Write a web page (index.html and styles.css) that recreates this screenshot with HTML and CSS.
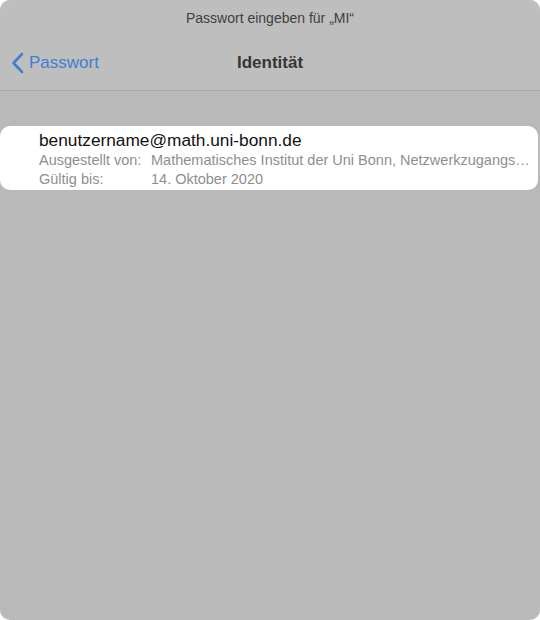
FILE: index.html
```html
<!DOCTYPE html>
<html>
<head>
    <link rel="stylesheet" href="styles.css">
</head>
<body>
    <div class="sheet">
        <div class="header">
            <div class="prompt">Passwort eingeben für „MI“</div>
            <div class="navbar">
                <a class="back" href="#">
                    <svg class="chevron" width="13" height="22" viewBox="0 0 13 22">
                        <path d="M11 2 L2.5 11 L11 20" fill="none" stroke="#3f7fd0" stroke-width="2.6" stroke-linecap="round" stroke-linejoin="round"/>
                    </svg>
                    <span>Passwort</span>
                </a>
                <div class="nav-title">Identität</div>
            </div>
        </div>

        <div class="content">
            <div class="card">
                <div class="identity">benutzername@math.uni-bonn.de</div>
                <div class="detail">
                    <span class="detail-label">Ausgestellt von:</span>
                    <span class="detail-value">Mathematisches Institut der Uni Bonn, Netzwerkzugangs…</span>
                </div>
                <div class="detail">
                    <span class="detail-label">Gültig bis:</span>
                    <span class="detail-value">14. Oktober 2020</span>
                </div>
            </div>
        </div>
    </div>
</body>
</html>
```

FILE: styles.css
```css
body {
    margin: 0;
    padding: 0;
    background-color: #ffffff;
    font-family: 'Liberation Sans', Arial, sans-serif;
}
.sheet {
    width: 540px;
    height: 620px;
    border-radius: 10px;
    overflow: hidden;
    background-color: #b9b9ba;
    display: flex;
    flex-direction: column;
}
.header {
    background-color: #bebebe;
    border-bottom: 1px solid #a9a9a9;
    height: 91px;
    box-sizing: border-box;
}
.prompt {
    text-align: center;
    font-size: 14px;
    color: #3f3f3f;
    padding-top: 10px;
    height: 20px;
}
.navbar {
    position: relative;
    height: 60px;
    display: flex;
    align-items: center;
    justify-content: center;
}
.back {
    position: absolute;
    left: 11px;
    top: 22px;
    display: flex;
    align-items: center;
    gap: 5px;
    color: #3f7fd0;
    text-decoration: none;
    font-size: 17px;
}
.chevron {
    display: block;
}
.nav-title {
    font-size: 17px;
    font-weight: bold;
    color: #363636;
    margin-top: 5px;
}
.content {
    padding: 35px 2px 0 0;
}
.card {
    background: #ffffff;
    border-radius: 10px;
    padding: 3px 10px 2px 39px;
    height: 64px;
    box-sizing: border-box;
}
.identity {
    font-size: 17.3px;
    color: #111111;
    line-height: 22px;
}
.detail {
    display: flex;
    font-size: 14.5px;
    line-height: 19px;
    color: #8e8e90;
    white-space: nowrap;
}
.detail-label {
    width: 112px;
    flex-shrink: 0;
}
```
